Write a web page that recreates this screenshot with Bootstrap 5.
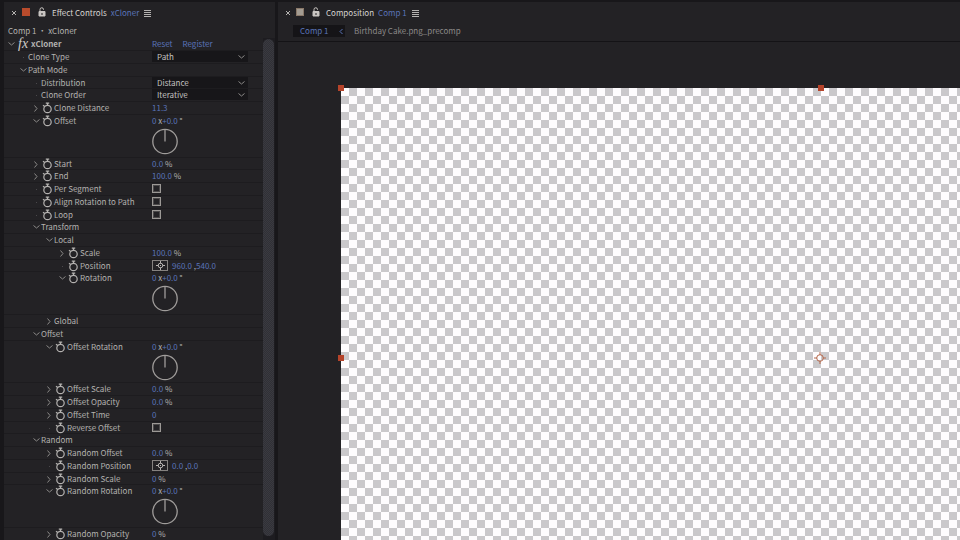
<!DOCTYPE html>
<html lang="en">
<head>
<meta charset="utf-8">
<meta name="viewport" content="width=device-width, initial-scale=1">
<title>Effect Controls</title>
<link href="https://cdn.jsdelivr.net/npm/bootstrap@5.3.0/dist/css/bootstrap.min.css" rel="stylesheet">
<style>
:root { --ink: #b4b2b0; --dim: #8b8988; --blue: #5a74ba; --panel: #232225; --edge: #18171a; }
body { background: var(--edge); color: var(--ink); font: 8px/12px "Noto Sans CJK SC", "Open Sans", sans-serif; }
button, select, a { font: inherit; }
button { background: none; border: 0; padding: 0; color: inherit; }
svg { display: block; fill: none; stroke: currentColor; }
.workspace { padding: 2px 0 0 4px; gap: 3px; }
.pane { background: var(--panel); min-width: 0; }
.effects { flex: 0 0 271px; }
.tabbar { height: 22px; padding-left: 7px; }
.tab-title { color: #d8d5d2; margin-right: 4px; }
.tab-name { color: var(--blue); margin-right: 5px; }
.subject { height: 14px; padding: 1px 0 0 4px; }
.swatch { width: 8px; height: 8px; margin: 0 8px 2px 5px; }
.swatch-red { background: #b84b2c; }
.swatch-sand { background: #a39c92; border: 1px solid #8a7869; }
.lock { margin: 0 6px 3px 0; color: #c9c5c2; }
.props { width: 259px; }
.prop { height: 13px; border-bottom: 1px solid #1d1c1f; display: flex; align-items: flex-start; }
.prop:nth-child(4n) { height: 12px; }
.prop.has-dial { height: 43px; }
.prop.has-dial:nth-child(4n) { height: 42px; }
.prop-name { flex: 0 0 148px; height: 12px; white-space: nowrap; }
.lv0 { padding-left: 2px; } .lv1 { padding-left: 14px; } .lv2 { padding-left: 27px; }
.lv3 { padding-left: 40px; } .lv4 { padding-left: 53px; }
.twirl { width: 10px; height: 12px; flex: none; display: flex; align-items: center; justify-content: center; color: var(--dim); }
.speck { width: 1px; height: 1px; background: #4a484b; }
.watch { width: 12px; height: 12px; flex: none; margin-right: 1px; display: flex; align-items: center; justify-content: center; }
.fx { font: italic 14px/12px "Liberation Serif", serif; color: #d0cdca; width: 13px; margin-left: 2px; }
.head { font-weight: 700; }
.blue, .blue:hover { color: var(--blue); text-decoration: none; }
.links { display: flex; gap: 10px; }
.choice { width: 96px; height: 11px; background: #171619; position: relative; }
.choice select { appearance: none; width: 100%; height: 11px; line-height: 11px; padding: 0 16px 0 5px; background: none; border: 0; color: #c5c2c0; display: block; }
.choice svg { position: absolute; right: 3px; top: 4px; pointer-events: none; color: var(--dim); }
.tick { appearance: none; width: 9px; height: 9px; margin: 1px 0 0; border: 1px solid #9c9996; outline: 1px solid #4b494a; outline-offset: -2px; display: block; }
.tick:checked { background: var(--blue); }
.target { width: 16px; height: 11px; border: 1px solid #858280; display: flex; align-items: center; justify-content: center; margin-right: 4px; color: #b5b2b0; }
.dial { display: block; margin-top: 1px; color: #a09d9b; }
.value-col { height: 12px; white-space: nowrap; }
.scroll { width: 12px; background: #1d1c20; padding: 1px 1px 5px 0; }
.thumb { width: 11px; border-radius: 6px; background: repeating-conic-gradient(#303036 0 25%, #3a3a40 0 50%) 0 0 / 2px 2px; }
.crumbs { height: 18px; padding: 1px 0 0 15px; border-bottom: 1px solid #141316; }
.crumb-on { width: 52px; height: 12px; background: #151417; padding: 0 2px 0 7px; }
.crumb-off { color: var(--dim); margin-left: 9px; }
.crumbs a { text-decoration: none; }
.stage { padding: 46px 0 0 63px; }
.comp { width: 960px; height: 540px; position: relative; border: 0; background: repeating-conic-gradient(#cac8cb 0 25%, #fefcfe 0 50%) 0 0 / 16px 16px; }
.grip { position: absolute; width: 6px; height: 6px; margin: -3px; background: #b5432a; }
.grip-tl { left: 0; top: 0; } .grip-t { left: 50%; top: 0; } .grip-l { left: 0; top: 50%; }
.anchor { position: absolute; left: 50%; top: 50%; margin: -6px -7px; color: #b5684c; }
</style>
<script src="https://cdn.jsdelivr.net/npm/bootstrap@5.3.0/dist/js/bootstrap.bundle.min.js"></script>
</head>
<body class="vh-100 overflow-hidden">
<main class="workspace d-flex h-100">
  <section class="pane effects d-flex flex-column" aria-label="Effect Controls">
    <header class="tabbar d-flex align-items-center flex-shrink-0">
      <button type="button" aria-label="Close effect controls"><svg width="6" height="6" viewBox="0 0 6 6"><path d="M1 1l4 4M5 1L1 5"/></svg></button>
      <span class="swatch swatch-red"></span>
      <button type="button" class="lock" aria-label="Lock effect controls"><svg width="8" height="10" viewBox="0 0 8 10"><path d="M2 5V2.500a1.700 1.700 0 0 1 3.500 0V3"/><path d="M1 4.500h6v4.500H1z" fill="currentColor"/><path d="M4 6v2" stroke="#232225"/></svg></button>
      <span class="tab-title">Effect Controls</span><span class="tab-name">xCloner</span>
      <button type="button" aria-label="Effect controls menu"><svg width="7" height="7" viewBox="0 0 7 7"><path d="M0 .5h7M0 2.500h7M0 4.500h7M0 6.500h7"/></svg></button>
    </header>
    <div class="subject flex-shrink-0">Comp 1 • xCloner</div>
    <div class="d-flex flex-grow-1">
      <div class="props" id="props"></div>
      <div class="scroll d-flex"><div class="thumb"></div></div>
    </div>
  </section>
  <section class="pane flex-grow-1 overflow-hidden" aria-label="Composition">
    <header class="tabbar d-flex align-items-center">
      <button type="button" aria-label="Close composition"><svg width="6" height="6" viewBox="0 0 6 6"><path d="M1 1l4 4M5 1L1 5"/></svg></button>
      <span class="swatch swatch-sand"></span>
      <button type="button" class="lock" aria-label="Lock composition"><svg width="8" height="10" viewBox="0 0 8 10"><path d="M2 5V2.500a1.700 1.700 0 0 1 3.500 0V3"/><path d="M1 4.500h6v4.500H1z" fill="currentColor"/><path d="M4 6v2" stroke="#232225"/></svg></button>
      <span class="tab-title">Composition</span><span class="tab-name">Comp 1</span>
      <button type="button" aria-label="Composition menu"><svg width="7" height="7" viewBox="0 0 7 7"><path d="M0 .5h7M0 2.500h7M0 4.500h7M0 6.500h7"/></svg></button>
    </header>
    <nav class="crumbs d-flex align-items-start" aria-label="Composition path">
      <div class="crumb-on d-flex align-items-center justify-content-between"><a href="#" class="blue">Comp 1</a><svg class="blue" width="4" height="7" viewBox="0 0 4 7"><path d="M3.500 1L1 3.500 3.500 6"/></svg></div>
      <a href="#" class="crumb-off">Birthday Cake.png_precomp</a>
    </nav>
    <div class="stage">
      <div class="comp">
        <span class="grip grip-tl"></span><span class="grip grip-t"></span><span class="grip grip-l"></span>
        <svg class="anchor" width="12" height="12" viewBox="0 0 12 12"><circle cx="6" cy="6" r="3.300"/><path d="M6 0v3M6 9v3M0 6h3M9 6h3"/></svg>
      </div>
    </div>
  </section>
</main>
<script>
// [level, arrow, stopwatch, name, kind, value]
const rows = [
  [0, 'open', 0, 'xCloner', 'links'],
  [1, '', 0, 'Clone Type', 'choice', 'Path'],
  [1, 'open', 0, 'Path Mode'],
  [2, '', 0, 'Distribution', 'choice', 'Distance'],
  [2, '', 0, 'Clone Order', 'choice', 'Iterative'],
  [2, 'shut', 1, 'Clone Distance', 'number', '11.3'],
  [2, 'open', 1, 'Offset', 'angle'],
  [2, 'shut', 1, 'Start', 'percent', '0.0'],
  [2, 'shut', 1, 'End', 'percent', '100.0'],
  [2, '', 1, 'Per Segment', 'tick'],
  [2, '', 1, 'Align Rotation to Path', 'tick'],
  [2, '', 1, 'Loop', 'tick'],
  [2, 'open', 0, 'Transform'],
  [3, 'open', 0, 'Local'],
  [4, 'shut', 1, 'Scale', 'percent', '100.0'],
  [4, '', 1, 'Position', 'point', ['960.0', '540.0']],
  [4, 'open', 1, 'Rotation', 'angle'],
  [3, 'shut', 0, 'Global'],
  [2, 'open', 0, 'Offset'],
  [3, 'open', 1, 'Offset Rotation', 'angle'],
  [3, 'shut', 1, 'Offset Scale', 'percent', '0.0'],
  [3, 'shut', 1, 'Offset Opacity', 'percent', '0.0'],
  [3, 'shut', 1, 'Offset Time', 'number', '0'],
  [3, '', 1, 'Reverse Offset', 'tick'],
  [2, 'open', 0, 'Random'],
  [3, 'shut', 1, 'Random Offset', 'percent', '0.0'],
  [3, '', 1, 'Random Position', 'point', ['0.0', '0.0']],
  [3, 'shut', 1, 'Random Scale', 'percent', '0'],
  [3, 'open', 1, 'Random Rotation', 'angle'],
  [3, 'shut', 1, 'Random Opacity', 'percent', '0']
];
const down = '<svg width="7" height="4" viewBox="0 0 7 4"><path d="M.5 .5l3 2.500 3-2.500"/></svg>';
const right = '<svg width="4" height="7" viewBox="0 0 4 7"><path d="M.5 .5L3 3.500.5 6.500"/></svg>';
const clock = '<svg width="11" height="12" viewBox="0 0 11 12"><circle cx="5.500" cy="7" r="3.700" stroke-width="1.200"/><path d="M3.800 1.200h3.400M5.500 1v2.500M1 3.200l1.700 1.300" stroke-width="1.300"/></svg>';
const cross = '<svg width="9" height="9" viewBox="0 0 9 9"><circle cx="4.500" cy="4.500" r="2.300"/><path d="M4.500 0v2.500M4.500 6.500V9M0 4.500h2.500M6.500 4.500H9M4 4.500h1"/></svg>';
const dial = '<svg width="27" height="27" viewBox="0 0 27 27"><circle cx="13" cy="13.500" r="12.200" stroke-width="1.300"/><path d="M13 2v11.500" stroke-width="1.300"/></svg>';
const num = v => `<button type="button" class="blue">${v}</button>`;
const kinds = {
  links: () => '<div class="links"><a href="#" class="blue">Reset</a><a href="#" class="blue">Register</a></div>',
  choice: (v, id) => `<div class="choice"><select id="${id}"><option>${v}</option></select>${down}</div>`,
  number: num,
  percent: v => num(v) + ' %',
  tick: (v, id) => `<input type="checkbox" class="tick" id="${id}">`,
  point: (v, id, name) => `<div class="d-flex"><button type="button" class="target" aria-label="Pick ${name}">${cross}</button><span>${num(v[0])} ,${num(v[1])}</span></div>`,
  angle: (v, id, name) => `${num('0')} x${num('+0.0')} °<button type="button" class="dial" aria-label="${name} dial">${dial}</button>`
};
document.getElementById('props').innerHTML = rows.map(([level, arrow, timed, name, kind, value], i) => {
  const id = 'prop' + i;
  const twirl = arrow
    ? `<button type="button" class="twirl" aria-label="Toggle ${name}">${arrow === 'open' ? down : right}</button>`
    : '<span class="twirl"><span class="speck"></span></span>';
  const watch = timed ? `<button type="button" class="watch" aria-label="Animate ${name}">${clock}</button>` : '';
  const fx = level === 0 ? '<span class="fx">fx</span>' : '';
  const label = kind === 'choice' || kind === 'tick' ? `<label for="${id}">${name}</label>` : `<span${level ? '' : ' class="head"'}>${name}</span>`;
  return `<div class="prop${kind === 'angle' ? ' has-dial' : ''}"><div class="prop-name d-flex lv${level}">${twirl}${watch}${fx}${label}</div>`
    + `<div class="value-col">${kind ? kinds[kind](value, id, name) : ''}</div></div>`;
}).join('');
</script>
</body>
</html>
